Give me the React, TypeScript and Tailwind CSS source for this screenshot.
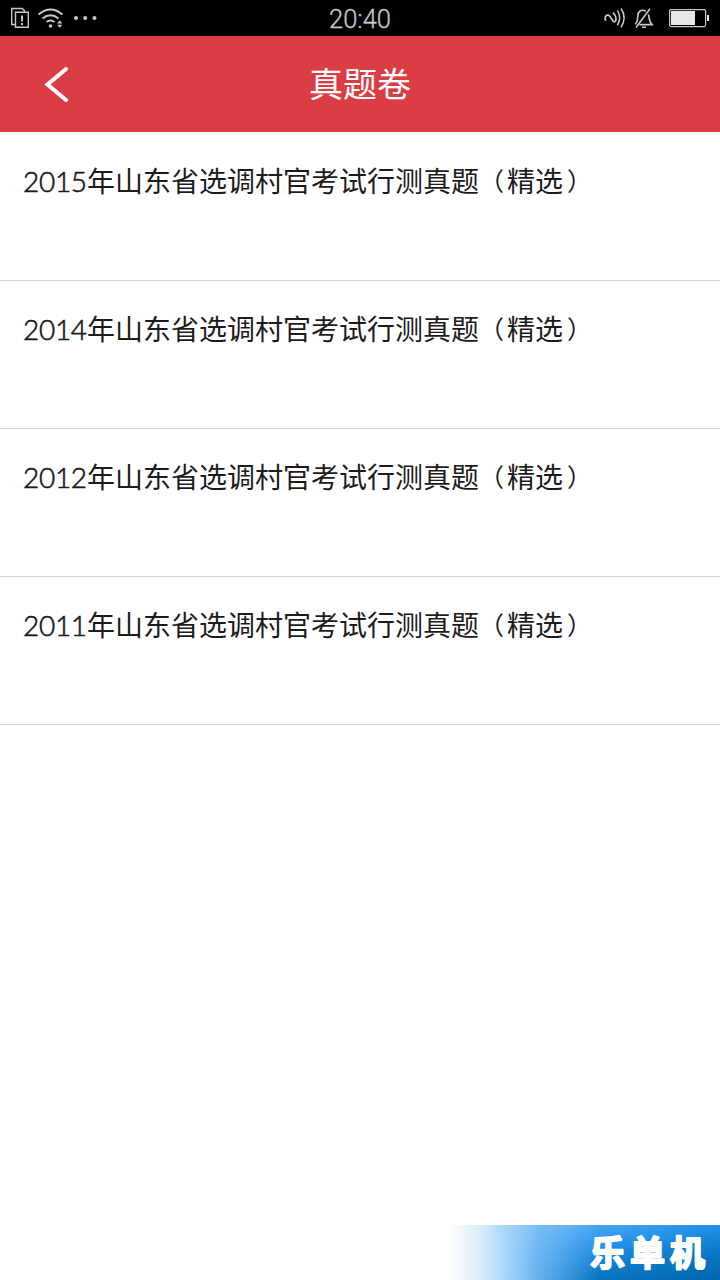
interface Paper {
  year: string;
  title: string;
  note: string;
}

const papers: Paper[] = [
  { year: "2015", title: "年山东省选调村官考试行测真题", note: "精选" },
  { year: "2014", title: "年山东省选调村官考试行测真题", note: "精选" },
  { year: "2012", title: "年山东省选调村官考试行测真题", note: "精选" },
  { year: "2011", title: "年山东省选调村官考试行测真题", note: "精选" },
];

const StatusBar = () => {
  return (
    <div className="grid h-9 grid-cols-3 items-center bg-black text-[#c8c8c8]">
      <div className="flex h-9 items-center">
        <svg width="110" height="36" viewBox="0 0 110 36" fill="none" stroke="currentColor">
          {/* Notification */}
          <path d="M15 24.5h-3.3v-16h10.6l2 2v1.5M15.5 12.2h12.8v15H15.5z" strokeWidth="1.4" />
          <path d="M22 15.5v6M22 23v2" strokeWidth="2" />
          {/* Wifi */}
          <path d="M38.5 14.5q12-10 24 0M42.5 18.5q8-6.5 16 0M46.5 22q4-3 8 0" strokeWidth="1.9" />
          <circle cx="50.5" cy="26" r="1.8" fill="currentColor" stroke="none" />
          <path d="M57 23.4l2.7-3 2.7 3zM57 24.8l2.7 3 2.7-3z" fill="currentColor" stroke="none" />
          <g fill="currentColor" stroke="none">
            <circle cx="76" cy="18" r="2" />
            <circle cx="85.2" cy="18" r="2" />
            <circle cx="94.5" cy="18" r="2" />
          </g>
        </svg>
      </div>

      <span className="pt-[3px] text-center font-['Roboto',sans-serif] text-[25.5px] leading-none font-light [-webkit-text-stroke:0.3px]">
        20:40
      </span>

      <div className="flex h-9 items-center justify-end">
        <svg width="130" height="36" viewBox="0 0 130 36" fill="none" stroke="currentColor">
          {/* NFC */}
          <path
            d="M15.6 20.8c-1.6-4.6 1.8-7.6 4.4-4.2l3 4.4c2 2.4 3.8-.6 2.6-4.4-.5-1.6-1.4-2.9-2.8-3.9"
            strokeWidth="1.7"
          />
          <path d="M27.4 10.3q4.5 7.2 0 15.1M31 8.5q6.2 9 0 18.8" strokeWidth="1.5" />
          {/* Muted bell */}
          <path
            d="M55.8 11.2c-4.6-2.6-8 .4-8 5.1 0 4-.6 6-2.4 8.3M58.6 14.5c.6 4.6.4 7 3.4 10.1H49.5M46 27.4L60 8.7M52 27.2h4"
            strokeWidth="1.6"
          />
          {/* Battery */}
          <rect x="79.6" y="9.6" width="36" height="17" rx="1.5" strokeWidth="1.2" />
          <path d="M81 11h24v14H81zM117 15h2v6h-2z" fill="#e8e8e8" stroke="none" />
        </svg>
      </div>
    </div>
  );
};

const Header = () => {
  return (
    <header className="grid h-24 grid-cols-3 items-center bg-[#db3d45] pb-[3px] text-white">
      <button className="flex pl-11" aria-label="返回">
        <svg width="26" height="38" viewBox="0 0 26 38" fill="none" stroke="currentColor">
          <path d="M22 5L3.5 20.5 22 36" strokeWidth="4" strokeLinecap="round" />
        </svg>
      </button>
      <h1 className="text-center text-[34px] leading-none">真题卷</h1>
    </header>
  );
};

const App = () => {
  return (
    <div className="flex h-[1280px] w-[720px] flex-col overflow-hidden bg-white font-['Noto_Sans_CJK_SC',sans-serif]">
      <StatusBar />
      <Header />

      <main className="flex-1 pt-px">
        {papers.map((paper) => (
          <div
            key={paper.year}
            className="flex h-[148px] items-start border-b border-[#d4d4d4] pt-[33px] pl-[23px] text-[28px] leading-[28px] whitespace-nowrap text-[#1c1c1c]"
          >
            <span className="w-16 pt-px font-['Lato',sans-serif] text-[28px] font-light tracking-[-0.3px] [-webkit-text-stroke:0.6px]">
              {paper.year}
            </span>
            <span>{paper.title}</span>
            <span className="w-7 text-[25px]">（</span>
            <span>{paper.note}</span>
            <span className="pl-1 text-[25px]">）</span>
          </div>
        ))}
      </main>

      {/* Watermark */}
      <footer className="flex h-[55px] w-[276px] items-center justify-end self-end bg-[linear-gradient(90deg,#fff_0%,#e0f0fc_12%,#a5d4f8_23%,rgba(130,194,246,0.75)_34%,rgba(110,184,246,0)_56%),linear-gradient(170deg,#7cc0f8_0%,#4aa6f2_25%,#2490e8_48%,#0c78c6_72%,#0066ac_100%)]">
        <svg width="150" height="55" viewBox="0 0 150 55" fill="#fff" stroke="#fff">
          <g
            className="font-['Noto_Sans_CJK_SC',sans-serif] text-[35px] font-bold"
            strokeWidth="2"
            strokeLinejoin="round"
          >
            <text x="20" y="40.5">
              乐
            </text>
            <text x="60" y="40.5">
              单
            </text>
            <text x="100" y="40.5">
              机
            </text>
          </g>
        </svg>
      </footer>
    </div>
  );
};

export default App;
